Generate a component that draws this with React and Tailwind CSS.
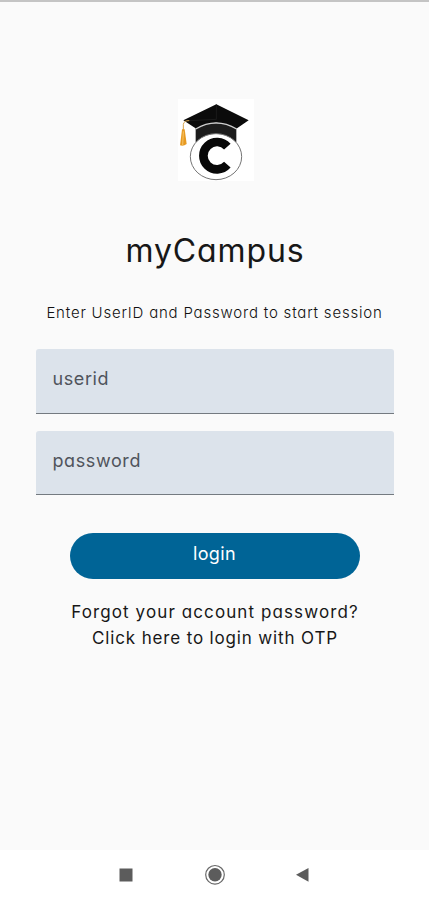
const FIELDS = [
  { name: "userid", type: "text" },
  { name: "password", type: "password" },
];

const Logo = () => (
  <svg viewBox="24 27 228 246" className="ml-[2px] h-[82px] w-[76px] bg-white">
    <path d="M77 100 L77 156 L199 156 L199 100 Z" fill="#1c1c1c" />
    <path d="M139 43 L236 91 L199 116 Q138 80 79 116 L40 91 Z" fill="#0b0b0b" />
    <path d="M139 43 L139 88 M139 88 L60 92" fill="none" stroke="#222" strokeWidth="2" />
    <path d="M77 117 Q138 80 200 117" fill="none" stroke="#cfcfcf" strokeWidth="4" />
    <ellipse cx="138" cy="200" rx="77" ry="69" fill="#fff" stroke="#747474" strokeWidth="3" />
    <path
      d="M172 170 A41 41 0 1 0 172 224"
      fill="none"
      stroke="#080808"
      strokeWidth="26"
    />
    <path d="M58 92 Q42 91 40 103 L40 123" fill="none" stroke="#d6a34d" strokeWidth="3" />
    <path d="M36 118 L44 118 L50 162 Q40 170 30 166 Z" fill="#e79a22" />
    <path d="M40 124 L38 166" stroke="#f7c568" strokeWidth="3" />
  </svg>
);

const NavBar = () => (
  <nav className="flex h-[50px] items-center bg-white">
    <svg viewBox="0 0 429 50" className="h-[50px] w-full" fill="#5c5c5c">
      <rect x="119.5" y="18.5" width="13" height="13" />
      <circle cx="215" cy="24.8" r="9.3" fill="#fff" stroke="#686868" strokeWidth="1.2" />
      <circle cx="215" cy="24.8" r="6.7" />
      <path d="M296 24.7 L308.5 18 L308.5 31.7 Z" />
    </svg>
  </nav>
);

const App = () => {
  return (
    <div className="flex h-[900px] w-full flex-col overflow-hidden border-t-2 border-[#c4c4c4] bg-[#fafafa] font-['Inter',sans-serif] text-[#171717] [font-feature-settings:'cv11']">
      <main className="flex flex-1 flex-col items-center pt-[97px]">
        <Logo />
        <h1 className="mt-[50px] pl-px text-[32px] leading-[40px] tracking-[0.9px] whitespace-nowrap">
          myCampus
        </h1>
        <p className="mt-[32px] text-[15px] leading-[20px] font-light tracking-[0.8px] whitespace-nowrap text-[#111]">
          Enter UserID and Password to start session
        </p>

        <form className="mt-[26px] flex w-[358px] flex-col items-center gap-[17px]">
          {FIELDS.map((field) => (
            <label
              key={field.name}
              className="flex h-[64.5px] w-full items-center rounded-t-[3px] border-b border-[#747a80] bg-[#dce3eb] px-[17px] pb-[3px]"
            >
              <input
                type={field.type}
                placeholder={field.name}
                className="w-full bg-transparent text-[18px] leading-[24px] tracking-[0.6px] outline-none placeholder:text-[#50545c]"
              />
            </label>
          ))}
          <button
            type="button"
            className="mt-[21px] h-[46px] w-[290px] rounded-full bg-[#006496] pb-[4px] text-[18px] leading-[24px] tracking-[0.4px] text-white"
          >
            login
          </button>
        </form>

        <div className="mt-[20px] pl-px text-center text-[17px] leading-[26px] whitespace-nowrap">
          <p className="tracking-[1.1px]">Forgot your account password?</p>
          <p className="tracking-[0.85px]">Click here to login with OTP</p>
        </div>
      </main>
      <NavBar />
    </div>
  );
};

export default App;
